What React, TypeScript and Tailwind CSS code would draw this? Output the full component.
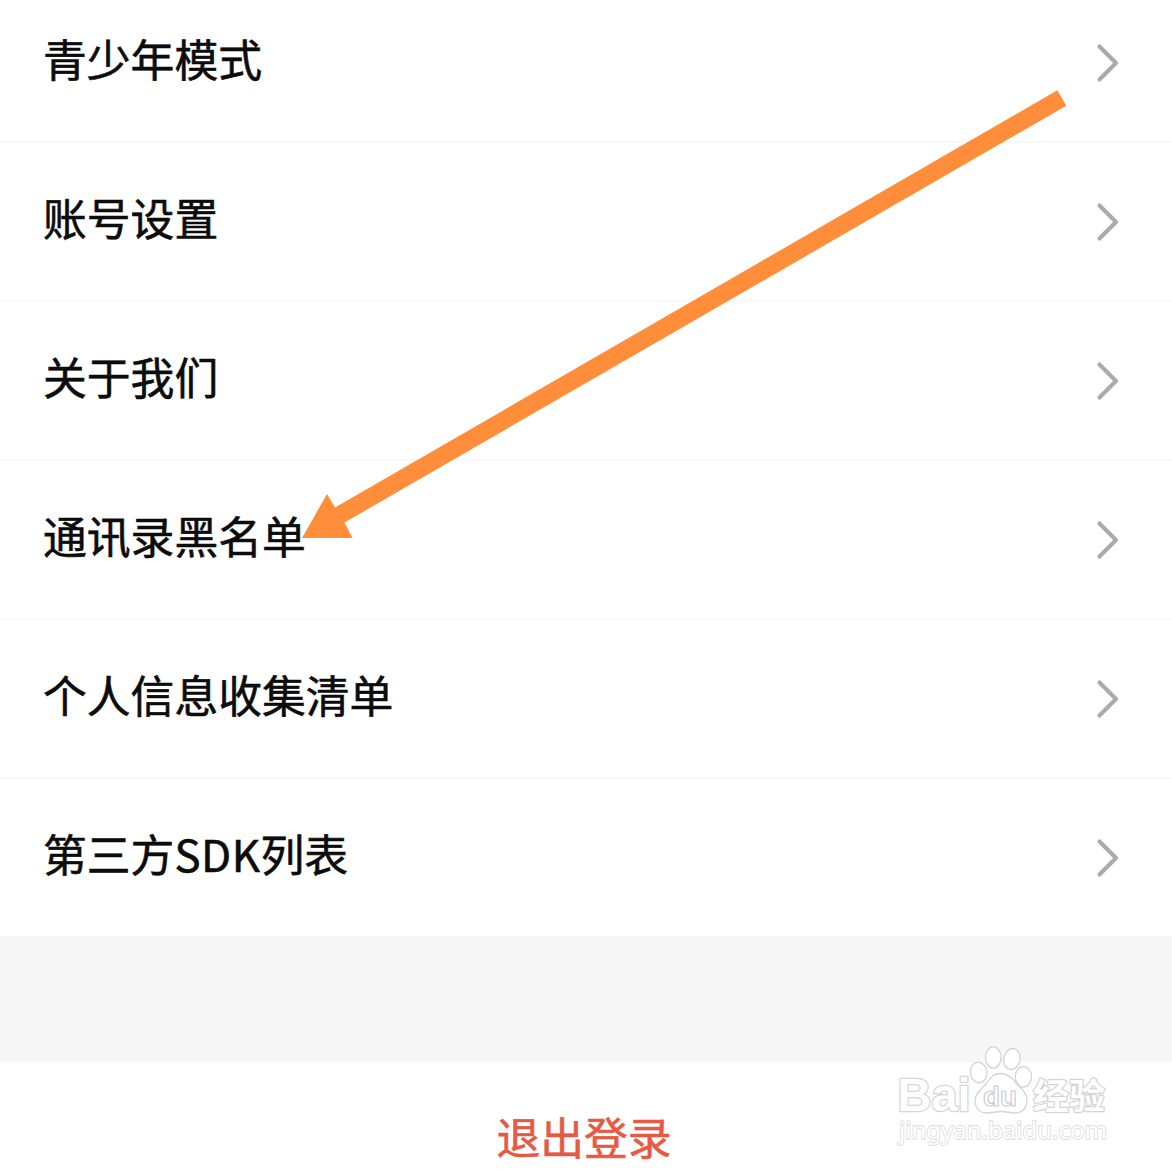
const rows = ['青少年模式', '账号设置', '关于我们', '通讯录黑名单', '个人信息收集清单'];

function Chevron() {
    return (
        <svg className="w-6 h-10 shrink-0" viewBox="0 0 24 40" fill="none">
            <path d="M3.5 3.5L20 20L3.5 36.5" stroke="#ababab" strokeWidth="4.2" strokeLinecap="round" strokeLinejoin="round" />
        </svg>
    );
}

function Arrow() {
    return (
        <svg className="absolute left-[300px] top-[88px] w-[770px] h-[452px] pointer-events-none" viewBox="300 88 770 452">
            <path d="M302 538L327 494L335 507.5L1057.3 90.3L1066.3 105.7L344.5 522.5L352.5 538Z" fill="#ff8d3a" />
        </svg>
    );
}

function Watermark() {
    return (
        <svg
            className="absolute left-[890px] top-[1040px] w-[230px] h-[112px] pointer-events-none"
            viewBox="890 1040 230 112"
            fill="#fff"
            stroke="#d4d4d4"
            strokeLinejoin="round"
        >
            <g strokeWidth="1.3">
                <ellipse cx="978.7" cy="1072.5" rx="8.3" ry="10.3" transform="rotate(-8 978.7 1072.5)" />
                <ellipse cx="993.3" cy="1057.5" rx="7.8" ry="10.6" />
                <ellipse cx="1011.9" cy="1059" rx="8.2" ry="10.6" transform="rotate(12 1011.9 1059)" />
                <ellipse cx="1023.4" cy="1076.8" rx="8.2" ry="10.2" />
                <path d="M1000.5 1073.5C993 1073.5 989.5 1079 986 1084C982 1089 975 1093 975 1101C975 1108 980 1113 987 1113C992 1113 996 1111.5 1001 1111.5C1006 1111.5 1010 1113 1015 1113C1023 1113 1027 1107 1027 1100C1027 1092 1020 1088 1016 1083C1012 1078 1008 1073.5 1000.5 1073.5Z" />
            </g>
            <g strokeWidth="2.4" className="[paint-order:stroke]">
                <text x="897.5" y="1111" textLength="73" lengthAdjust="spacingAndGlyphs" className="font-['Liberation_Sans',sans-serif] font-bold text-[47px]">Bai</text>
                <text x="1033" y="1108.5" textLength="72" lengthAdjust="spacingAndGlyphs" className="font-['Noto_Sans_CJK_SC',sans-serif] font-bold text-[35px]">经验</text>
            </g>
            <text x="899" y="1138.5" textLength="208" lengthAdjust="spacingAndGlyphs" stroke="#dedede" strokeWidth="1.8" className="font-['Noto_Sans',sans-serif] text-[24px] [paint-order:stroke]">jingyan.baidu.com</text>
            <text x="983" y="1105.5" textLength="34" lengthAdjust="spacingAndGlyphs" strokeWidth="1.2" stroke="#cdcdcd" className="font-['Liberation_Sans',sans-serif] font-bold text-[27px]">du</text>
        </svg>
    );
}

export default function App() {
    return (
        <div className="relative w-[1172px] h-[1172px] overflow-hidden bg-white flex flex-col font-['Noto_Sans_CJK_SC',sans-serif] text-[43.8px] leading-[60px] text-[#0c0c0c] [-webkit-text-stroke:0.6px]">
            {/* The list is scrolled, so the first row is partly above the top edge */}
            <ul className="-mt-4 shrink-0">
                {rows.map((label) => (
                    <li key={label} className="h-[159px] pl-[43px] pr-[52px] flex items-center justify-between border-b-2 border-[#f8f8f8]">
                        <span className="-mt-[9px]">{label}</span>
                        <Chevron />
                    </li>
                ))}
                <li className="h-[157px] pl-[43px] pr-[52px] flex items-center justify-between">
                    <span className="-mt-[9px]">
                        第三方<span className="tracking-[0.5px]">SDK</span>列表
                    </span>
                    <Chevron />
                </li>
            </ul>

            <div className="h-[126px] shrink-0 bg-[#f7f7f7]" />

            <button className="h-[159px] shrink-0 pb-3 pr-1 text-center text-[#e65a44]">退出登录</button>

            <Arrow />
            {/* The stroke is reset so that the watermark keeps its own outlines */}
            <div className="[-webkit-text-stroke:0]">
                <Watermark />
            </div>
        </div>
    );
}
